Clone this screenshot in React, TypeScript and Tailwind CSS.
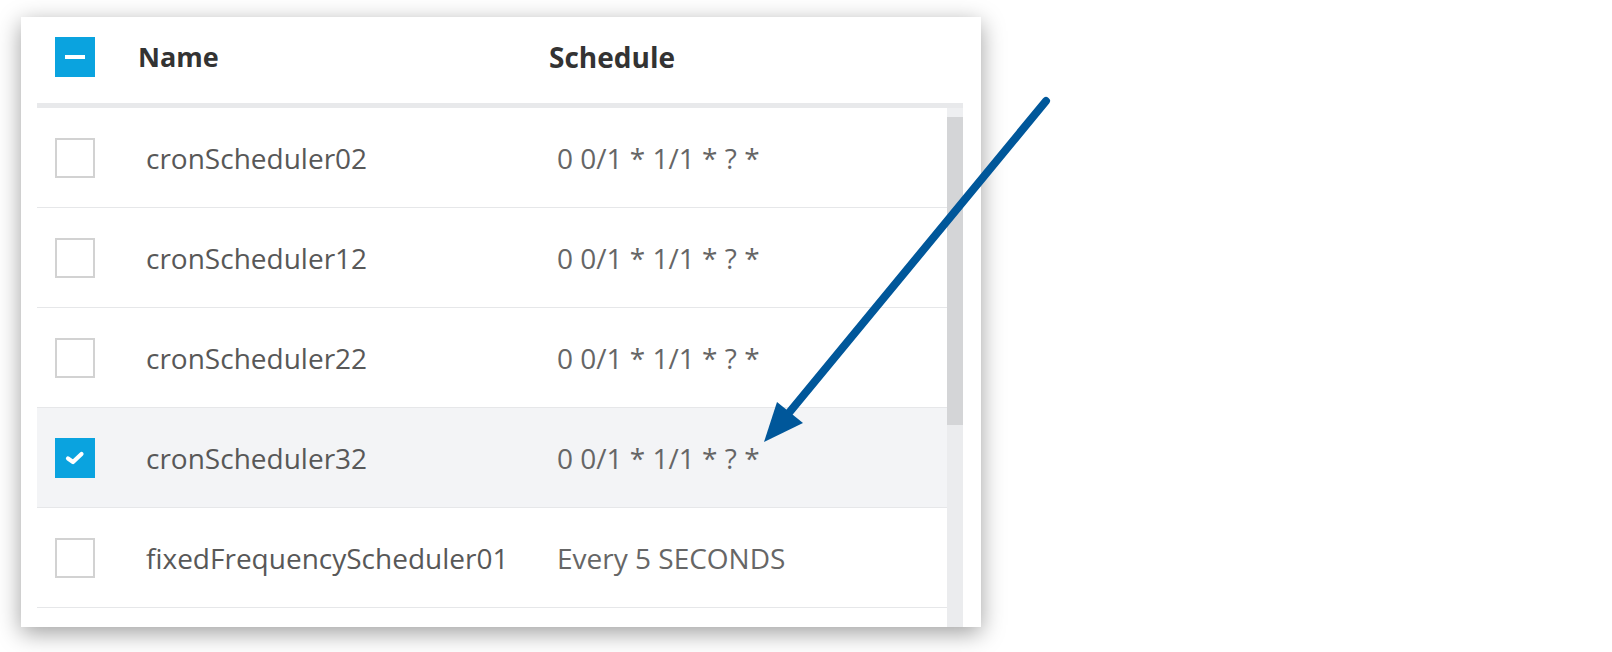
import React from "react";

const rows = [
  { name: "cronScheduler02", schedule: "0 0/1 * 1/1 * ? *", checked: false },
  { name: "cronScheduler12", schedule: "0 0/1 * 1/1 * ? *", checked: false },
  { name: "cronScheduler22", schedule: "0 0/1 * 1/1 * ? *", checked: false },
  { name: "cronScheduler32", schedule: "0 0/1 * 1/1 * ? *", checked: true },
  { name: "fixedFrequencyScheduler01", schedule: "Every 5 SECONDS", checked: false },
];

function Box({ checked }: { checked: boolean }) {
  if (checked) {
    return (
      <div className="w-[40px] h-[40px] bg-[#0aa3df] flex items-center justify-center shrink-0">
        <svg width="20" height="16" viewBox="0 0 20 16">
          <path d="M3 8.5 L8 12 L16.5 4" fill="none" stroke="white" strokeWidth="4.2" strokeLinecap="round" strokeLinejoin="round" />
        </svg>
      </div>
    );
  }
  return <div className="w-[40px] h-[40px] border-2 border-[#d2d2d2] bg-white shrink-0" />;
}

export default function App() {
  return (
    <div className="relative w-[1612px] h-[652px] bg-white overflow-hidden" style={{ fontFamily: '"Open Sans", sans-serif' }}>
      <div className="absolute left-[21px] top-[17px] w-[960px] h-[610px] bg-white shadow-[0_6px_22px_rgba(0,0,0,0.38)] overflow-hidden pl-[16px] pr-[18px] flex flex-col">
        <div className="h-[86px] pb-[6px] flex items-center shrink-0">
          <div className="ml-[18px] w-[40px] h-[40px] bg-[#0aa3df] flex items-center justify-center shrink-0">
            <div className="w-[20px] h-[4px] bg-white" />
          </div>
          <div className="ml-[43px] w-[411px] text-[27px] font-bold text-[#333333]">Name</div>
          <div className="text-[28px] font-bold text-[#333333]">Schedule</div>
        </div>
        <div className="h-[5px] bg-[#e8e9eb] shrink-0" />
        <div className="flex flex-1 min-h-0">
          <div className="flex-1 flex flex-col">
            {rows.map((r, i) => (
              <div
                key={i}
                className={`h-[100px] shrink-0 flex items-center border-b border-[#e6e7e9] ${r.checked ? "bg-[#f3f4f6]" : "bg-white"}`}
              >
                <div className="ml-[18px]">
                  <Box checked={r.checked} />
                </div>
                <div className="ml-[51px] w-[411px] text-[28px] text-[#585858] whitespace-nowrap">{r.name}</div>
                <div className="text-[28px] text-[#666666] whitespace-nowrap">{r.schedule}</div>
              </div>
            ))}
            <div className="h-[100px] shrink-0 bg-white" />
          </div>
          <div className="w-[16px] flex flex-col bg-[#ebecee]">
            <div className="h-[9px] bg-[#eeeff1]" />
            <div className="h-[308px] bg-[#d4d5d7]" />
          </div>
        </div>
      </div>
      <svg className="absolute left-0 top-0" width="1612" height="652" viewBox="0 0 1612 652">
        <line x1="1046" y1="101" x2="788" y2="414" stroke="#00579a" strokeWidth="8" strokeLinecap="round" />
        <polygon points="764,442 777,402 803,423" fill="#00579a" />
      </svg>
    </div>
  );
}
